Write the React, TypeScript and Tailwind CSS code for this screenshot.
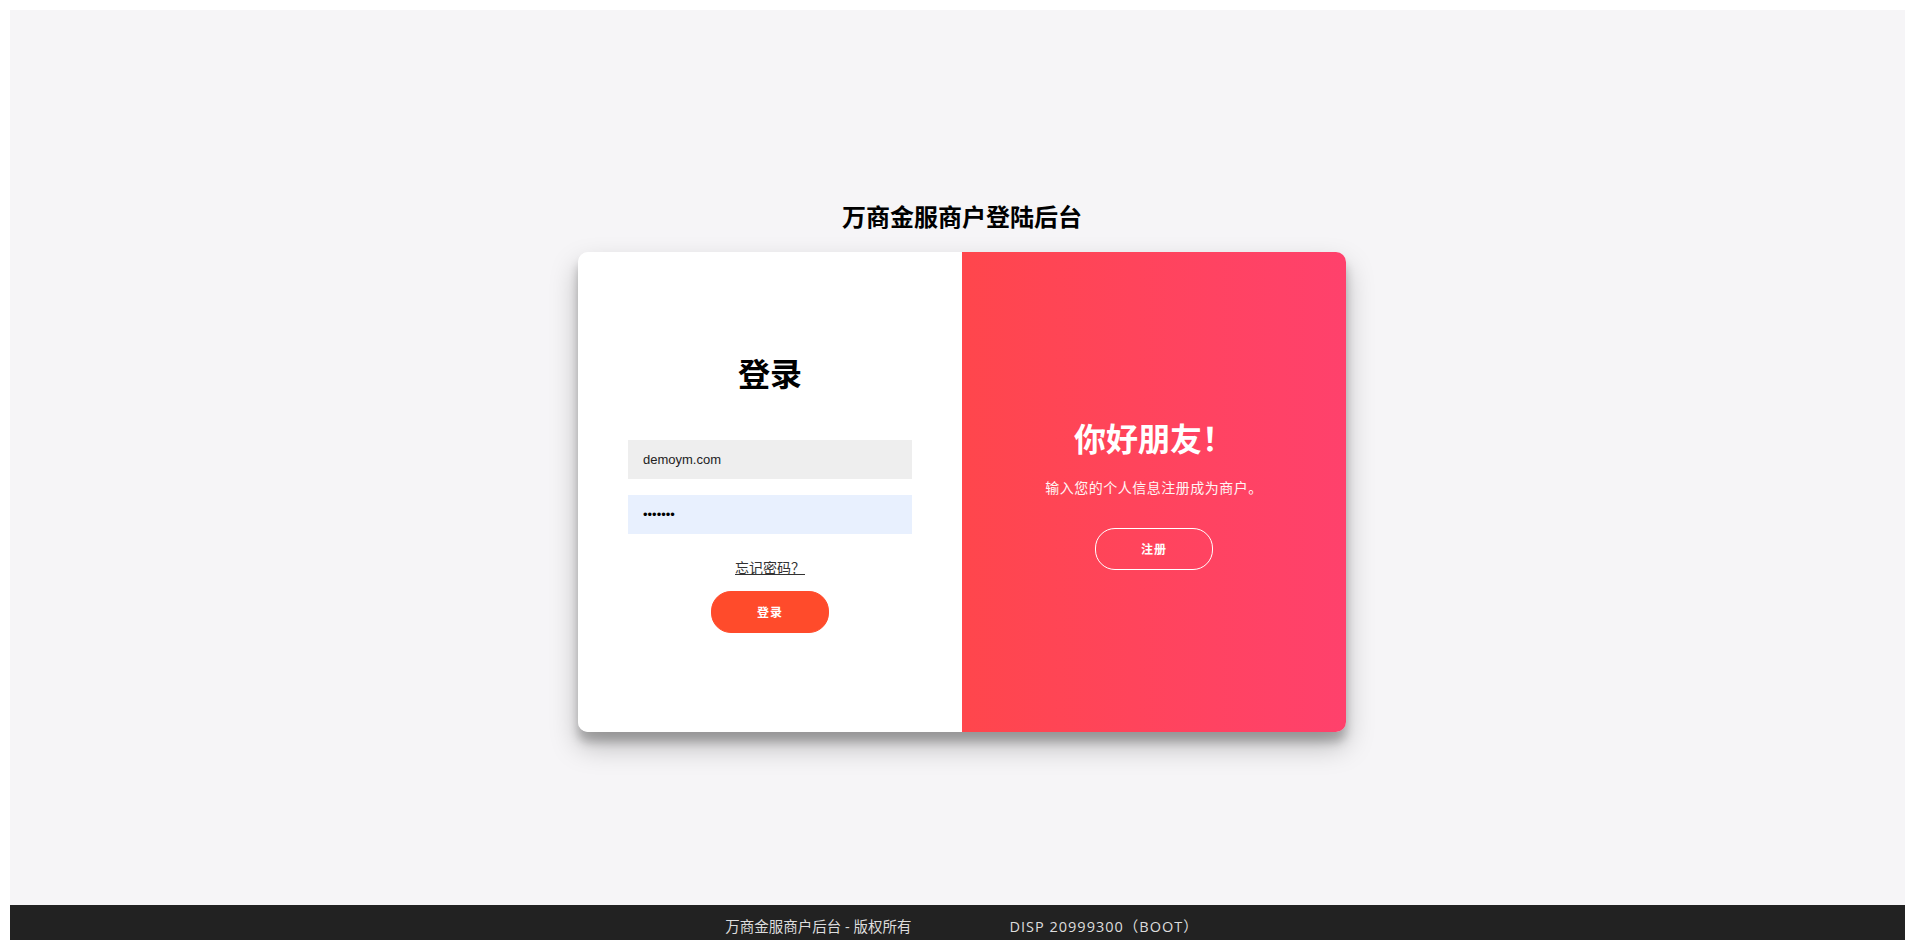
import { useState } from "react";

const cjk = { fontFamily: '"Noto Sans CJK SC", "Noto Sans", sans-serif' };
const footerFont = { fontFamily: '"Open Sans", "Noto Sans CJK SC", sans-serif' };

export default function App() {
  const [account, setAccount] = useState("demoym.com");
  const [password, setPassword] = useState("1234567");

  return (
    <div className="flex h-[940px] flex-col overflow-hidden bg-white px-[10px] pt-[10px]" style={cjk}>
      {/* main area */}
      <div className="flex flex-1 flex-col items-center bg-[#f6f5f7] pl-[9px] pt-[190px]">
        <h2 className="mb-[20px] text-[24px] font-bold leading-[32px] text-black">万商金服商户登陆后台</h2>

        <div className="flex h-[480px] w-[768px] overflow-hidden rounded-[10px] shadow-[0_14px_28px_rgba(0,0,0,0.25),0_10px_10px_rgba(0,0,0,0.22)]">
          {/* sign in */}
          <form
            className="flex w-[384px] flex-col items-center justify-center bg-white px-[50px] pt-[2px]"
            onSubmit={(e) => e.preventDefault()}
          >
            <h1 className="text-[32px] font-bold leading-[37px] text-black">登录</h1>
            <input
              type="text"
              value={account}
              onChange={(e) => setAccount(e.target.value)}
              className="mt-[49px] h-[39px] w-full bg-[#eeeeee] px-[15px] text-[13px] text-[#222] outline-none"
              style={{ fontFamily: '"Liberation Sans", Arial, sans-serif' }}
            />
            <input
              type="password"
              value={password}
              onChange={(e) => setPassword(e.target.value)}
              className="mt-[16px] h-[39px] w-full bg-[#e8f0fe] px-[15px] text-[13px] text-black outline-none"
              style={{ fontFamily: '"Liberation Sans", Arial, sans-serif' }}
            />
            <a href="#" className="mt-[23px] text-[14px] leading-[20px] text-[#333] underline">
              忘记密码？
            </a>
            <button
              type="submit"
              className="mt-[14px] h-[42px] w-[118px] rounded-[20px] border border-[#ff4b2b] bg-[#ff4b2b] text-[12px] font-bold tracking-[1px] text-white"
            >
              登录
            </button>
          </form>

          {/* overlay */}
          <div className="flex w-[384px] flex-col items-center justify-center bg-gradient-to-r from-[#ff464c] to-[#ff416c] px-[40px] pt-[4px] text-center text-white">
            <h1 className="text-[32px] font-bold leading-[37px]">你好朋友！</h1>
            <p className="mt-[21px] text-[14px] font-normal leading-[20px] tracking-[0.5px] text-[#fff5f5]">
              输入您的个人信息注册成为商户。
            </p>
            <button className="mt-[31px] h-[42px] w-[118px] rounded-[20px] border border-white bg-transparent text-[12px] font-bold tracking-[1px] text-white">
              注册
            </button>
          </div>
        </div>
      </div>

      {/* footer */}
      <footer className="flex h-[35px] shrink-0 justify-center gap-[98px] bg-[#222222] pl-[9px] pt-[12px] text-[14.5px] leading-[20px] text-[#dddddd]" style={footerFont}>
        <span>万商金服商户后台 - 版权所有</span>
        <span className="tracking-[1px]">DISP 20999300（BOOT）</span>
      </footer>
    </div>
  );
}
